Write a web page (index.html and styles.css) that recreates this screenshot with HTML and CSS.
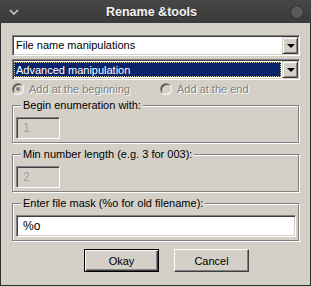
FILE: index.html
```html
<!DOCTYPE html>
<html>
<head>
<link rel="stylesheet" href="styles.css">
<title>Rename &amp;tools</title>
</head>
<body>
  <div class="window">
    <div class="titlebar">
      <svg class="chevron" width="10" height="6" viewBox="0 0 10 6">
        <path d="M1 1 L5 5 L9 1" fill="none" stroke="#d8d8d8" stroke-width="1.4"/>
      </svg>
      <span class="title">Rename &amp;tools</span>
      <svg class="close" width="14" height="14" viewBox="0 0 14 14">
        <circle cx="7" cy="7" r="6.2" fill="#2a2a2a"/>
        <circle cx="7" cy="7" r="5.2" fill="#5a5a5a" stroke="#6e6e6e" stroke-width="0.8"/>
      </svg>
    </div>

    <div class="content">
      <div class="combo">
        <span class="combo_text">File name manipulations</span>
        <span class="combo_btn"><span class="arrow"></span></span>
      </div>
      <div class="combo">
        <span class="combo_text selected">Advanced manipulation</span>
        <span class="combo_btn"><span class="arrow"></span></span>
      </div>

      <div class="radios">
        <label class="radio"><span class="radio_dot checked"></span>Add at the beginning</label>
        <label class="radio"><span class="radio_dot"></span>Add at the end</label>
      </div>

      <fieldset class="group">
        <legend>Begin enumeration with:</legend>
        <div class="field small disabled">1</div>
      </fieldset>

      <fieldset class="group">
        <legend>Min number length (e.g. 3 for 003):</legend>
        <div class="field small disabled">2</div>
      </fieldset>

      <fieldset class="group">
        <legend>Enter file mask (%o for old filename):</legend>
        <div class="field wide">%o</div>
      </fieldset>

      <div class="buttons">
        <button type="button" class="btn default">Okay</button>
        <button type="button" class="btn">Cancel</button>
      </div>
    </div>
  </div>
</body>
</html>
```

FILE: styles.css
```css
body {
  margin: 0;
  background: #d4d0c8;
  font-family: "Liberation Sans", Arial, sans-serif;
  font-size: 11px;
  color: #000;
}

.window {
  width: 311px;
  height: 286px;
  box-sizing: border-box;
  background: #d4d0c8;
  border: 1px solid #2e2e2e;
  border-top: none;
}

/* title bar */
.titlebar {
  height: 23px;
  display: grid;
  grid-template-columns: 1fr auto 1fr;
  align-items: center;
  background: linear-gradient(#474747, #3a3a3a);
  margin: 0 -1px;
  padding: 0 9px;
}

.chevron {
  display: block;
}

.title {
  color: #f4f4f4;
  font-weight: bold;
  font-size: 12.5px;
  text-shadow: 0 1px 0 #222;
  margin-right: 8px;
}

.close {
  justify-self: end;
  display: block;
  margin-right: -2px;
}

.content {
  padding: 12px 10px 0 11px;
}

/* combo boxes */
.combo {
  height: 21px;
  box-sizing: border-box;
  display: flex;
  background: #fff;
  border: 1px solid;
  border-color: #808080 #fff #fff #808080;
  box-shadow: inset 1px 1px #404040, inset -1px -1px #d4d0c8;
  padding: 1px;
  margin-bottom: 3px;
}

.combo_text {
  flex: 1;
  line-height: 17px;
  padding-left: 2px;
  white-space: nowrap;
}

.combo_text.selected {
  background: #0a246a;
  color: #fff;
  margin: 1px 1px 1px 0;
  line-height: 13px;
  padding-top: 1px;
  padding-left: 1px;
  border: 1px dotted #c8c890;
}

.combo_btn {
  width: 16px;
  height: 17px;
  box-sizing: border-box;
  background: #d4d0c8;
  border: 1px solid;
  border-color: #d4d0c8 #404040 #404040 #d4d0c8;
  box-shadow: inset 1px 1px #fff, inset -1px -1px #808080;
  display: flex;
  align-items: center;
  justify-content: center;
}

.arrow {
  width: 0;
  height: 0;
  border-left: 4px solid transparent;
  border-right: 4px solid transparent;
  border-top: 4px solid #000;
  margin-left: 1px;
}

/* radio buttons */
.radios {
  display: grid;
  grid-template-columns: 148px auto;
  height: 12px;
  margin-top: 3px;
  margin-bottom: 4px;
}

.radio {
  display: flex;
  align-items: center;
  gap: 5px;
  color: #808080;
  text-shadow: 1px 1px 0 #fff;
  line-height: 12px;
}

.radio_dot {
  width: 12px;
  height: 12px;
  box-sizing: border-box;
  border-radius: 50%;
  border: 1px solid;
  border-color: #808080 #fff #fff #808080;
  box-shadow: inset 1px 1px #404040;
  background: #d4d0c8;
  display: flex;
  align-items: center;
  justify-content: center;
}

.radio_dot.checked::after {
  content: "";
  width: 4px;
  height: 4px;
  border-radius: 50%;
  background: #808080;
}

/* group boxes */
.group {
  margin: 0 1px 5px 0;
  padding: 0 2px 3px 3px;
  border: 1px solid #808080;
  box-shadow: inset 1px 1px #fff, 1px 1px #fff;
}

.group legend {
  padding: 0 2px;
  margin-left: 5px;
  line-height: 12px;
  background: #d4d0c8;
}

.field {
  height: 22px;
  box-sizing: border-box;
  margin-top: 6px;
  background: #fff;
  border: 1px solid;
  border-color: #808080 #fff #fff #808080;
  box-shadow: inset 1px 1px #404040, inset -1px -1px #d4d0c8;
  padding-left: 6px;
  line-height: 20px;
  font-size: 12px;
}

.field.small {
  width: 44px;
}

.field.wide {
  width: 280px;
}

.field.disabled {
  background: #d4d0c8;
  color: #a0a0a0;
}

/* buttons */
.buttons {
  display: flex;
  gap: 15px;
  margin-top: 8px;
  padding-left: 72px;
}

.btn {
  width: 75px;
  height: 23px;
  box-sizing: border-box;
  font-family: "Liberation Sans", Arial, sans-serif;
  font-size: 11px;
  color: #000;
  background: #d4d0c8;
  border: 1px solid;
  border-color: #fff #404040 #404040 #fff;
  box-shadow: inset -1px -1px #808080, inset 1px 1px #d4d0c8;
  padding: 0;
}

.btn.default {
  border: 1px solid #000;
  box-shadow: inset 1px 1px #fff, inset -1px -1px #404040, inset -2px -2px #808080;
}
```
